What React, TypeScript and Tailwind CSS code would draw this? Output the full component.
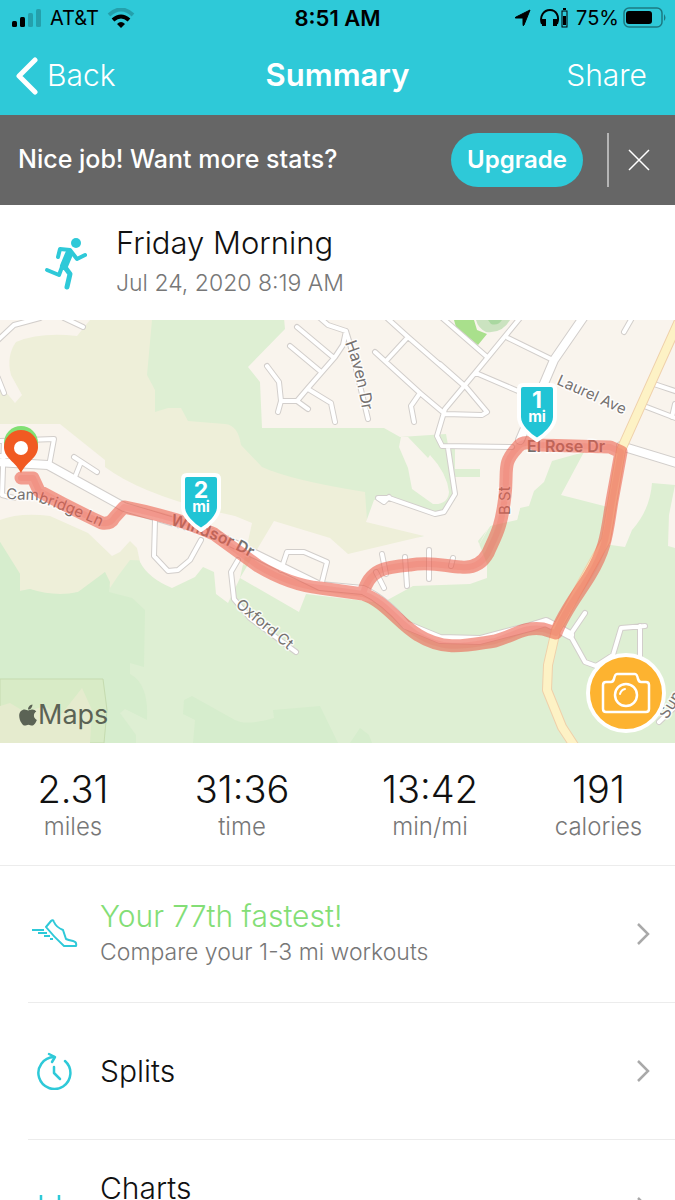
import type { ReactNode } from 'react';
import { FaApple } from 'react-icons/fa';

const stats = [
  { value: '2.31', label: 'miles' },
  { value: '31:36', label: 'time' },
  { value: '13:42', label: 'min/mi' },
  { value: '191', label: 'calories' },
];

// thin residential streets
const streets = [
  'M-2 20 L14 5 L40 -2',
  'M64 -2 L83 7',
  'M-2 58 L4 73',
  'M0 121 L54 119 L49 146',
  'M4 121 L2 175 L14 178',
  'M-2 136 L12 136',
  'M74 137 L97 152 M81 142 L75 157',
  'M155 200 L154 236 L168 251 L178 250 L190 240 L201 220',
  'M238 240 L231 252 L234 279 L250 298 L296 332',
  'M281 250 L287 232 L304 232 L327 242 L321 266',
  'M320 -2 L328 5 L346 11 L343 25 L335 37 L308 68 L297 81 L281 81 L278 92',
  'M267 46 L279 62 L281 81 M297 81 L308 89',
  'M297 7 L334 38 M290 26 L320 51 M308 69 L331 83 L335 102',
  'M346 11 L350 24 L368 99',
  'M387 -2 L408 17 L462 64',
  'M408 17 L386 41 M375 32 L420 73 L445 94',
  'M420 73 L411 86 L414 102',
  'M440 -4 L486 36 M440 44 L466 67 L487 92 L482 95 L445 94',
  'M520 -2 L475 53 L445 89 L437 116 L442 126 L512 127',
  'M448 128 L455 174 L444 192 L435 194 L389 178 L378 178 L384 182 L389 177',
  'M508 18 L555 41 M476 53 L518 71',
  'M632 -2 L624 12',
  'M654 64 L678 72 M644 86 L678 99 M675 84 L672 97',
  'M382 234 L386 254 M376 252 L384 268 M405 237 L407 266 M429 230 L429 259 M451 246 L453 238',
  'M570 315 L585 293 M570 315 L585 342 L596 346 L613 335 L621 308 L645 306 M640 306 L640 340',
  'M659 402 L678 384',
];

const mainRoads =
  'M-5 142 L48 145 L124 187 L214 214 L320 266 L363 270 Q385 280 406 305 L440 319 L480 320 L530 307 L546 302 L570 315 M585 -5 L554 40 L520 120 M621 126 L680 144';

const highway = 'M683 -8 L621 130 L606 220 L556 310 L548 345 L547 370 L562 407 L577 430';

const runRoute =
  'M21 158 L33 158 L39 171 Q70 188 102 203 Q111 204 114 198 L124 187 Q180 198 214 214 L258 246 Q290 265 320 268 L363 274 C385 281 399 304 418 315 C445 332 468 325 495 321 C515 315 526 306 543 309 L556 313 C564 291 580 272 590 255 C607 227 607 210 612 181 L621 132 L610 127 L538 125 Q523 119 517 128 C502 144 508 149 505 176 C501 209 496 215 488 233 Q479 249 461 247 C448 247 432 241 410 245 C385 247 369 249 363 274';

function StatusBar() {
  return (
    <div className="grid h-9 grid-cols-3 items-center px-3 text-xl text-black">
      <div className="flex items-center gap-2">
        <svg viewBox="0 0 30 20" className="h-5 w-[30px]">
          <rect x="0" y="13" width="5" height="6" rx="1.5" />
          <rect x="8" y="9" width="5" height="10" rx="1.5" />
          <rect x="16" y="5" width="5" height="14" rx="1.5" opacity=".2" />
          <rect x="24" y="1" width="5" height="18" rx="1.5" opacity=".2" />
        </svg>
        <span>AT&amp;T</span>
        <svg viewBox="0 0 28 20" className="h-5 w-7" fill="none" stroke="#000">
          <path d="M2 7 Q14 -4 26 7" strokeWidth="4" opacity=".2" />
          <path d="M6 12 Q14 5 22 12" strokeWidth="4" />
          <path d="M10 16 Q14 12 18 16 L14 20 Z" fill="#000" stroke="none" />
        </svg>
      </div>
      <div className="text-center text-[22px] font-semibold">8:51 AM</div>
      <div className="flex items-center justify-end gap-1">
        <svg viewBox="0 0 18 18" className="mr-1 size-[18px]">
          <path d="M16 1 L10 16 Q9 18 9 15 V9 H2 Q0 9 2 8 Z" stroke="#000" strokeLinejoin="round" />
        </svg>
        <svg viewBox="0 0 28 20" className="h-5 w-7" fill="none" stroke="#000" strokeWidth="2">
          <path d="M2 16 C-1 8 4 2 10 2 S20 8 17 16" />
          <path d="M4 11 V18 M15 11 V18" strokeWidth="4" />
          <rect x="22" y="3" width="5" height="16" strokeWidth="1" />
          <path d="M23 1 h3" />
          <rect x="23" y="8" width="3" height="9" fill="#000" stroke="none" />
        </svg>
        <span className="ml-1">75%</span>
        <svg viewBox="0 0 44 22" className="-mr-1 h-[22px] w-11">
          <rect x="1" y="1" width="38" height="19" rx="5" fill="none" stroke="#000" strokeWidth="1.5" opacity=".4" />
          <rect x="3" y="4" width="26" height="13" rx="3" />
          <path d="M41 7 q3 4 0 7 Z" opacity=".4" />
        </svg>
      </div>
    </div>
  );
}

function MileFlag({ x, y, mile }: { x: number; y: number; mile: string }) {
  return (
    <g transform={`translate(${x} ${y})`} fontFamily="Inter, sans-serif" fontWeight="700" textAnchor="middle">
      <path
        d="M-14 -55 H14 Q18 -55 18 -51 V-23 C18 -14 8 -5 0 0 C-8 -5 -18 -14 -18 -23 V-51 Q-18 -55 -14 -55 Z"
        fill="#21c4d5"
        stroke="#fff"
        strokeWidth="4"
        strokeLinejoin="round"
      />
      <text y="-32" fill="#fff" fontSize="23">{mile}</text>
      <text y="-18" fill="#fff" fontSize="15">mi</text>
    </g>
  );
}

function RouteMap() {
  return (
    <div className="relative">
      <svg viewBox="0 0 675 423" className="block w-full" role="img" aria-label="Route map">
        <rect width="675" height="423" fill="#deefd3" />

        {/* hills */}
        <path d="M0 0 H152 L147 55 L155 70 V92 L168 88 H181 L188 101 L225 104 Q238 105 241 125 L262 147 Q290 160 365 172 L367 200 L424 215 L345 250 L130 240 L118 256 L110 268 L105 252 Q90 272 65 275 Q40 274 30 269 L20 271 V254 L0 222 Z" fill="#eeefd9" />
        <path d="M0 222 L20 254 V271 L30 269 Q55 277 78 272 L105 252 L110 262 L109 272 L132 278 L145 290 L144 347 L130 343 V354 Q149 364 147 400 L125 389 L120 393 L136 415 V423 H0 Z" fill="#d6edcd" />
        <path d="M184 380 L192 376 L235 400 Q246 406 274 398 L273 390 L320 386 L338 423 H193 L195 400 L183 394 Z M350 423 L360 408 L369 415 L372 423 Z" fill="#d6edcd" />
        <path d="M0 359 H103 L107 390 L104 423 H0 Z" fill="#d8ebc6" stroke="#c5dbaf" />
        <path d="M0 386 L10 383 L25 392 L45 386 L60 396 L82 368 L92 390 L90 423 H0 Z" fill="#e5ebce" />

        {/* neighbourhoods */}
        <g fill="#f9f4ed">
          <path d="M0 0 H90 L77 16 Q40 12 16 22 Q6 36 11 55 L22 75 L15 83 L0 65 Z" />
          <path d="M0 104 H60 L105 140 V147 Q145 177 235 196 L252 203 L240 258 L228 283 L216 274 L214 252 L203 247 L195 257 L172 268 Q148 258 140 242 L137 228 L130 221 L120 232 L112 236 L88 213 L50 196 Q20 192 0 200 Z" />
          <path d="M284 -2 H675 V165 L652 163 Q650 190 632 210 L625 227 L604 224 L608 187 L561 175 L584 132 L552 141 L544 162 L534 171 L529 186 L520 188 L517 200 L490 206 L475 232 L495 195 L498 145 L448 125 L446 114 L400 117 L384 108 H262 L260 62 L248 47 L285 9 Z" />
          <path d="M401 117 H408 L428 138 L430 135 Q447 153 449 172 Q448 185 433 184 L412 169 L408 148 L399 127 Z" />
          <path d="M274 201 L330 218 L348 234 L424 216 L366 202 L374 180 L390 177 L436 196 L455 180 V128 H510 L520 188 L517 200 L501 193 L478 221 L487 244 V258 L470 264 L413 266 L382 283 L306 274 L299 292 L240 258 Z" />
          <path d="M675 165 L669 195 L668 226 L675 228 Z" />
        </g>
        <path d="M452 149 H480 V157 H452 Z" fill="#deefd3" />
        <path d="M454 0 H474 L477 10 L487 14 L478 25 L456 7 Z" fill="#a9e08c" />
        <path d="M476 0 H510 Q502 14 486 12 Q478 8 476 0 Z" fill="#cbe3c0" />
        <path d="M488 0 H502 Q498 6 491 4 Z" fill="#a9d8a0" />

        {/* roads */}
        <g fill="none" strokeLinejoin="round" strokeLinecap="round">
          <path d={streets.join(' ')} stroke="#d2cecb" strokeWidth="6" />
          <path d={mainRoads} stroke="#d2cecb" strokeWidth="10" />
          <path d={streets.join(' ')} stroke="#fff" strokeWidth="4" />
          <path d={mainRoads} stroke="#fff" strokeWidth="8" />
          <path d={highway} stroke="#efd0aa" strokeWidth="10" />
          <path d={highway} stroke="#fdf2c5" strokeWidth="8" />
        </g>

        {/* street names */}
        <defs>
          <path id="cambridge" d="M6 179 L32 180 Q70 192 110 211" />
          <path id="windsor" d="M170 205 Q220 218 270 249" />
          <path id="haven" d="M345 23 Q356 50 364 100" />
          <path id="laurel" d="M556 64 L640 102" />
          <path id="oxford" d="M235 286 L306 345" />
        </defs>
        <g fontFamily="Inter, sans-serif" fontSize="16" fill="#75716f" stroke="#fff" strokeOpacity=".8" strokeWidth="3" strokeLinejoin="round" paintOrder="stroke">
          <text fontSize="15"><textPath href="#cambridge">Cambridge Ln</textPath></text>
          <text fontWeight="600"><textPath href="#windsor">Windsor Dr</textPath></text>
          <text><textPath href="#haven">Haven Dr</textPath></text>
          <text fontSize="15"><textPath href="#laurel">Laurel Ave</textPath></text>
          <text fontSize="15"><textPath href="#oxford">Oxford Ct</textPath></text>
          <text fontSize="15" transform="translate(510 195) rotate(-90)">B St</text>
          <text x="527" y="132" fontWeight="600">El Rose Dr</text>
          <text transform="translate(667 400) rotate(-58)">Sun</text>
        </g>

        <g fill="none" strokeLinejoin="round" strokeLinecap="round">
          <path d={runRoute} stroke="#ec5e4c" strokeOpacity=".58" strokeWidth="13" />
          <path d={runRoute} stroke="#e8604f" strokeOpacity=".15" strokeWidth="6" />
        </g>

        <circle cx="21" cy="123" r="17" fill="#81e073" />
        <path d="M21 153 C16 142 4 138 4 127 A17 17 0 1 1 38 127 C38 138 26 142 21 153 Z" fill="#f15a22" />
        <circle cx="21" cy="128" r="7" fill="#fff" />
        <MileFlag x={201} y={210} mile="2" />
        <MileFlag x={537} y={120} mile="1" />
      </svg>

      <div className="absolute bottom-3 left-[18px] flex items-center text-[27px] leading-8 text-[#5b6355]">
        <FaApple className="h-6 w-5" />
        <span>Maps</span>
      </div>
      <button
        type="button"
        aria-label="Add photo"
        className="absolute right-[9px] bottom-[10px] flex size-20 items-center justify-center rounded-full border-4 border-white bg-[#fdb330]"
      >
        <svg viewBox="0 0 50 42" className="h-[42px] w-[50px]" fill="none" stroke="#fff" strokeWidth="2.5" strokeLinejoin="round">
          <path d="M5 10 H10 Q12 10 13 7 Q14 2 16 2 H34 Q36 2 37 7 Q38 10 40 10 H45 Q48 10 48 13 V37 Q48 40 45 40 H5 Q2 40 2 37 V13 Q2 10 5 10 Z" />
          <circle cx="25" cy="23" r="11" />
          <path d="M19 22 Q20 18 24 17" strokeLinecap="round" strokeWidth="2" />
        </svg>
      </button>
    </div>
  );
}

function Row({ icon, children }: { icon: ReactNode; children: ReactNode }) {
  return (
    <li className="ml-7">
      <a href="#" className="flex h-34 items-center pr-6">
        <span className="flex w-[72px] shrink-0">{icon}</span>
        <span className="flex-1">{children}</span>
        <svg viewBox="0 0 16 24" className="h-6 w-4" fill="none" stroke="#a9a9a9" strokeWidth="2.5">
          <path d="M3 2 L13 12 L3 22" />
        </svg>
      </a>
    </li>
  );
}

export default function App() {
  return (
    <div className="h-screen overflow-hidden bg-white font-['Inter',sans-serif] font-normal">
      <header className="bg-[#2ec9d8] text-white">
        <StatusBar />
        <nav className="grid h-[79px] grid-cols-3 items-center px-4 text-[30px] font-light">
          <button type="button" className="flex items-center gap-2">
            <svg viewBox="0 0 23 40" className="h-10 w-[23px]" fill="none" stroke="#fff" strokeWidth="5" strokeLinecap="round" strokeLinejoin="round">
              <path d="M19 4 L3 20 L19 36" />
            </svg>
            Back
          </button>
          <h1 className="text-center text-[31px] font-semibold">Summary</h1>
          <button type="button" className="pr-3 text-right">Share</button>
        </nav>
      </header>

      <section className="flex h-[90px] items-center bg-[#666] pr-6 pl-[18px] text-white">
        <p className="flex-1 text-[25px] font-medium">Nice job! Want more stats?</p>
        <button type="button" className="h-[54px] w-[132px] rounded-full bg-[#2ec9d8] text-2xl font-semibold">
          Upgrade
        </button>
        <div className="mr-[18px] ml-6 h-[54px] border-l-2 border-[#b5b5b5]" />
        <button type="button" aria-label="Dismiss">
          <svg viewBox="0 0 24 24" className="size-6" stroke="#fff" strokeWidth="1.5">
            <path d="M2 2 L22 22 M22 2 L2 22" />
          </svg>
        </button>
      </section>

      <section className="flex h-[115px] items-center pl-11">
        <svg viewBox="0 0 44 54" className="h-[54px] w-11" fill="none" stroke="#2ec9d8" strokeLinecap="round" strokeLinejoin="round">
          <circle cx="32" cy="7" r="5" fill="#2ec9d8" stroke="none" />
          <path d="M14 21 L16 13 L26 14 L33 23 L41 19" strokeWidth="4" />
          <path d="M25 18 L20 30" strokeWidth="8" />
          <path d="M20 30 L26 38 L23 51" strokeWidth="5" />
          <path d="M18 31 L15 39 L3 34" strokeWidth="4" />
        </svg>
        <div className="ml-7">
          <h2 className="text-[31px] leading-10 font-light text-[#111]">Friday Morning</h2>
          <p className="text-[23px] leading-10 font-light text-[#777]">Jul 24, 2020 8:19 AM</p>
        </div>
      </section>

      <RouteMap />

      <dl className="grid h-[123px] grid-cols-[146fr_192fr_184fr_153fr] border-b border-[#ececec] pt-6 text-center">
        {stats.map((s) => (
          <div key={s.label} className="flex flex-col-reverse justify-end">
            <dt className="text-2xl leading-8 font-light text-[#777]">{s.label}</dt>
            <dd className="text-[38px] leading-11 font-light text-[#111]">{s.value}</dd>
          </div>
        ))}
      </dl>

      <ul className="divide-y divide-[#ececec] font-light">
        <Row
          icon={
            <svg viewBox="0 0 46 32" className="ml-1 h-8 w-[46px]" fill="none" stroke="#2ec9d8" strokeWidth="2" strokeLinejoin="round">
              <path d="M14 9 L19 3 Q21 1 22 4 Q24 9 31 12 L34 21 Q36 22 41 23 Q45 24 44 28 H32 Q22 19 14 9 Z" />
              <path d="M0 12 H12 M6 15 H15 M12 18 H18 M18 21 H21" />
            </svg>
          }
        >
          <span className="block text-[30px] leading-9 text-[#83de76]">Your 77th fastest!</span>
          <span className="block text-[23px] leading-9 text-[#777]">Compare your 1-3 mi workouts</span>
        </Row>
        <Row
          icon={
            <svg viewBox="0 0 36 38" className="ml-2 h-[38px] w-9" fill="none" stroke="#2ec9d8" strokeWidth="2.5" strokeLinecap="round" strokeLinejoin="round">
              <path d="M18 5 A16 16 0 1 0 29 9" />
              <path d="M13 2 L19 5 L16 10 M18 15 V21 L24 27" />
            </svg>
          }
        >
          <span className="text-[30px] text-[#111]">Splits</span>
        </Row>
        <Row
          icon={
            <svg viewBox="0 0 36 28" className="ml-2 h-7 w-9" fill="none" stroke="#2ec9d8" strokeWidth="2.5">
              <path d="M5 1 V26 M23 1 V26 M1 26 H35" />
            </svg>
          }
        >
          <span className="block pb-10 text-[30px] leading-9 text-[#111]">Charts</span>
        </Row>
      </ul>
    </div>
  );
}
